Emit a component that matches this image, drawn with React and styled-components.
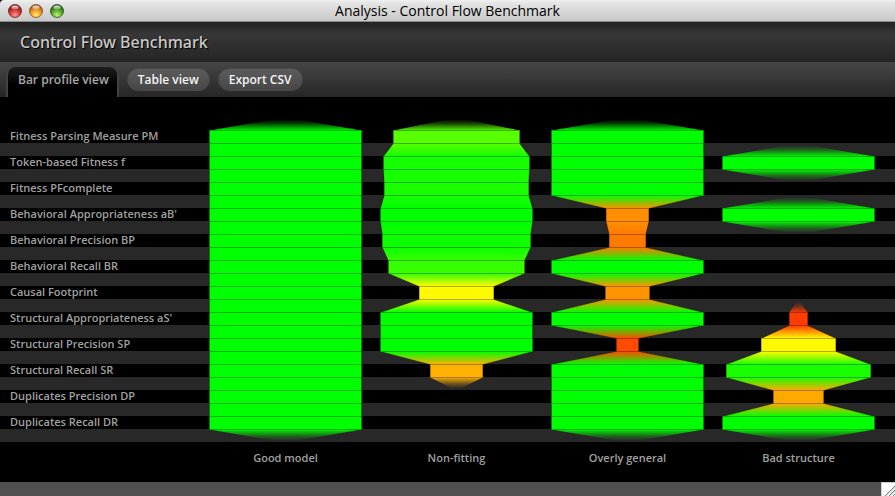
import React, { useId, useState } from "react";
import styled, { createGlobalStyle, css } from "styled-components";

const STEP = 13;
const ROW = STEP * 2;
const COLUMN = 171;
const HALF_BAR = 76;

const metrics = [
  "Fitness Parsing Measure PM",
  "Token-based Fitness f",
  "Fitness PFcomplete",
  "Behavioral Appropriateness aB'",
  "Behavioral Precision BP",
  "Behavioral Recall BR",
  "Causal Footprint",
  "Structural Appropriateness aS'",
  "Structural Precision SP",
  "Structural Recall SR",
  "Duplicates Precision DP",
  "Duplicates Recall DR",
];

const models = [
  { name: "Good model", values: [1, 1, 1, 1, 1, 1, 1, 1, 1, 1, 1, 1] },
  {
    name: "Non-fitting",
    values: [0.83, 0.96, 0.95, 1, 0.975, 0.895, 0.49, 1, 1, 0.345, null, null],
  },
  {
    name: "Overly general",
    values: [1, 1, 1, 0.28, 0.24, 1, 0.29, 1, 0.145, 1, 1, 1],
  },
  {
    name: "Bad structure",
    values: [null, 1, null, 1, null, null, null, 0.12, 0.49, 0.95, 0.33, 1],
  },
];

const GlobalStyle = createGlobalStyle`
  * { box-sizing: border-box; }
  body {
    margin: 0;
    background: #000;
    font-family: "Open Sans", "Noto Sans", sans-serif;
  }
`;

const Window = styled.div`
  display: flex;
  flex-direction: column;
  min-height: 100vh;
`;

const TitleBar = styled.header`
  display: grid;
  grid-template-columns: 1fr auto 1fr;
  align-items: center;
  height: 22px;
  padding: 0 8px;
  background: linear-gradient(#f0f0f0, #e2e2e2 20%, #c8c8c8);
  border-bottom: 1px solid #8a8a8a;
  border-top-left-radius: 4px;
`;

const WindowControls = styled.div`
  display: flex;
  gap: 7px;
`;

const ControlButton = styled.button`
  display: block;
  width: 14px;
  height: 14px;
  padding: 0;
  border: 0;
  background: none;

  svg {
    display: block;
  }
`;

const WindowTitle = styled.div`
  font-size: 14px;
  line-height: 20px;
  color: #000;
`;

const Header = styled.div`
  display: flex;
  align-items: center;
  height: 40px;
  padding: 0 20px;
  background: linear-gradient(#232323, #373737 30%, #353535 40%, #272727 90%, #242424);
`;

const Heading = styled.h1`
  margin: 0;
  font-family: "Noto Sans", "Open Sans", sans-serif;
  font-size: 16px;
  font-weight: 500;
  line-height: 24px;
  color: #cacaca;
  text-shadow: 1px 1px 1px #000;
`;

const Tabs = styled.nav`
  display: flex;
  align-items: flex-start;
  gap: 8px;
  height: 35px;
  padding: 3px 6px 0;
  background: linear-gradient(#464646, #262626);
`;

const Tab = styled.button`
  height: 23px;
  margin: 3px 0 0;
  padding: 0 10px;
  border: 1px solid #4a4a4a;
  border-radius: 12px;
  background: linear-gradient(#5c5c5c, #474747);
  font: 600 12px/20px "Open Sans", "Noto Sans", sans-serif;
  color: #f4f4f4;
  white-space: nowrap;

  ${(p) =>
    p.$active &&
    css`
      height: 32px;
      margin: 0;
      padding: 0 8px 4px 10px;
      border: 2px solid #424242;
      border-bottom: 0;
      border-radius: 10px 10px 0 0;
      background: linear-gradient(#1e1e1e, #000 60%);
      color: #a8a8a8;
    `}
`;

const Chart = styled.main`
  flex: 1;
  padding-top: 33px;
  background: #000;
`;

const Columns = styled.div`
  display: grid;
  grid-template-columns: 200px repeat(4, 1fr);
  padding-right: 11px;
`;

const Plot = styled(Columns)`
  background: repeating-linear-gradient(#000 0 13px, #282828 13px 26px);
`;

const MetricList = styled.ul`
  margin: 0;
  padding: 0 0 0 10px;
  list-style: none;
`;

const Metric = styled.li`
  height: 26px;
  font-size: 11px;
  font-weight: 600;
  line-height: 12px;
  color: #a0a0a0;
  white-space: nowrap;
`;

const ProfileSvg = styled.svg`
  display: block;
  width: 100%;
  height: 312px;
  overflow: visible;
`;

const ModelNames = styled(Columns)`
  padding-top: 8px;
  padding-bottom: 16px;
`;

const ModelName = styled.div`
  font-size: 11px;
  font-weight: 600;
  line-height: 16px;
  text-align: center;
  color: #a0a0a0;

  &:first-child {
    grid-column: 2;
  }
`;

const StatusBar = styled.footer`
  display: flex;
  justify-content: flex-end;
  height: 14px;
  background: #505050;
`;

function scoreColor(v) {
  return v < 0.5
    ? `rgb(255, ${Math.round(510 * v)}, 0)`
    : `rgb(${Math.round(510 * (1 - v))}, 255, 0)`;
}

const fadeStops = {
  top: [
    [0.15, 0],
    [0.5, 0.3],
    [1, 0.95],
  ],
  bottom: [
    [0, 0.95],
    [0.5, 0.3],
    [0.85, 0],
  ],
};

function BandGradient({ id, band }) {
  return (
    <linearGradient id={id} x1="0" y1="0" x2="0" y2="1">
      {band.fade ? (
        fadeStops[band.fade].map(([offset, opacity]) => (
          <stop key={offset} offset={offset} stopColor={band.a} stopOpacity={opacity} />
        ))
      ) : (
        <>
          <stop offset="0" stopColor={band.a} />
          <stop offset="1" stopColor={band.b} />
        </>
      )}
    </linearGradient>
  );
}

function Profile({ name, values }) {
  const id = useId();
  const mid = COLUMN / 2;
  const bands = [];

  values.forEach((v, i) => {
    if (v === null) return;
    const half = HALF_BAR * v;
    const top = i * ROW;
    const bottom = top + STEP;
    const next = values[i + 1] ?? null;
    const prev = values[i - 1] ?? null;
    if (prev === null) {
      bands.push({ y: top - STEP, from: 0, to: half, a: scoreColor(v), b: scoreColor(v), fade: "top" });
    }
    bands.push({
      y: bottom,
      from: half,
      to: next === null ? 0 : HALF_BAR * next,
      a: scoreColor(v),
      b: scoreColor(next === null ? v : next),
      fade: next === null ? "bottom" : null,
    });
  });

  return (
    <ProfileSvg viewBox="0 0 171 312" preserveAspectRatio="none" role="img" aria-label={name}>
      <defs>
        {bands.map((b, i) => (
          <BandGradient key={i} id={`${id}-${i}`} band={b} />
        ))}
      </defs>
      {bands.map((b, i) => (
        <polygon
          key={i}
          fill={`url(#${id}-${i})`}
          points={`${mid - b.from},${b.y + 0.5} ${mid + b.from},${b.y + 0.5} ${mid + b.to},${b.y + STEP + 0.5} ${mid - b.to},${b.y + STEP + 0.5}`}
        />
      ))}
      {bands.map((b, i) =>
        b.fade ? null : (
          <path
            key={i}
            d={`M${mid - b.from},${b.y + 0.5} L${mid - b.to},${b.y + STEP + 0.5} M${mid + b.from},${b.y + 0.5} L${mid + b.to},${b.y + STEP + 0.5}`}
            stroke="#000"
            strokeOpacity="0.2"
          />
        )
      )}
      {values.map((v, i) =>
        v === null ? null : (
          <g key={i} fill={scoreColor(v)}>
            <rect x={mid - HALF_BAR * v} y={i * ROW} width={HALF_BAR * v * 2} height={STEP + 1} />
            <rect
              x={mid - HALF_BAR * v}
              y={i * ROW + 0.5}
              width={HALF_BAR * v * 2}
              height={STEP}
              stroke="#000"
              strokeOpacity="0.3"
            />
          </g>
        )
      )}
    </ProfileSvg>
  );
}

const orbs = [
  { label: "Close", dark: "#6e1410", base: "#d23a35", glow: "#ff9a92" },
  { label: "Minimize", dark: "#84460c", base: "#f09a28", glow: "#ffec70" },
  { label: "Zoom", dark: "#1d4a10", base: "#58a828", glow: "#c0f880" },
];

function Orb({ label, dark, base, glow }) {
  const id = useId();
  return (
    <ControlButton type="button" aria-label={label}>
      <svg width="14" height="14" viewBox="0 0 14 14">
        <defs>
          <radialGradient id={`${id}-body`} cx="0.5" cy="0.82" r="0.8">
            <stop offset="0" stopColor={glow} />
            <stop offset="0.5" stopColor={base} />
            <stop offset="1" stopColor={dark} />
          </radialGradient>
          <linearGradient id={`${id}-shine`} x1="0" y1="0" x2="0" y2="1">
            <stop offset="0" stopColor="#fff" stopOpacity="0.9" />
            <stop offset="1" stopColor="#fff" stopOpacity="0.15" />
          </linearGradient>
        </defs>
        <circle cx="7" cy="7" r="6.5" fill={`url(#${id}-body)`} stroke={dark} strokeOpacity="0.75" />
        <ellipse cx="7" cy="3.6" rx="3.6" ry="2.1" fill={`url(#${id}-shine)`} />
      </svg>
    </ControlButton>
  );
}

function ResizeGrip() {
  return (
    <svg width="14" height="14" viewBox="0 0 14 14" aria-hidden="true">
      <rect width="14" height="14" fill="#fff" />
      <path d="M0.5 0V14M0 0.5H14" stroke="#d0d0d0" />
      <path d="M4 14L14 4M8 14L14 8M12 14L14 12" stroke="#777" />
      <path d="M5 14.5L14.5 5M9 14.5L14.5 9" stroke="#ccc" />
    </svg>
  );
}

const views = ["Bar profile view", "Table view", "Export CSV"];

export default function App() {
  const [view, setView] = useState(views[0]);
  return (
    <Window>
      <GlobalStyle />
      <TitleBar>
        <WindowControls>
          {orbs.map((o) => (
            <Orb key={o.label} {...o} />
          ))}
        </WindowControls>
        <WindowTitle>Analysis - Control Flow Benchmark</WindowTitle>
      </TitleBar>
      <Header>
        <Heading>Control Flow Benchmark</Heading>
      </Header>
      <Tabs>
        {views.map((v) => (
          <Tab key={v} type="button" $active={v === view} aria-pressed={v === view} onClick={() => setView(v)}>
            {v}
          </Tab>
        ))}
      </Tabs>
      <Chart>
        <Plot>
          <MetricList>
            {metrics.map((m) => (
              <Metric key={m}>{m}</Metric>
            ))}
          </MetricList>
          {models.map((m) => (
            <Profile key={m.name} {...m} />
          ))}
        </Plot>
        <ModelNames>
          {models.map((m) => (
            <ModelName key={m.name}>{m.name}</ModelName>
          ))}
        </ModelNames>
      </Chart>
      <StatusBar>
        <ResizeGrip />
      </StatusBar>
    </Window>
  );
}
